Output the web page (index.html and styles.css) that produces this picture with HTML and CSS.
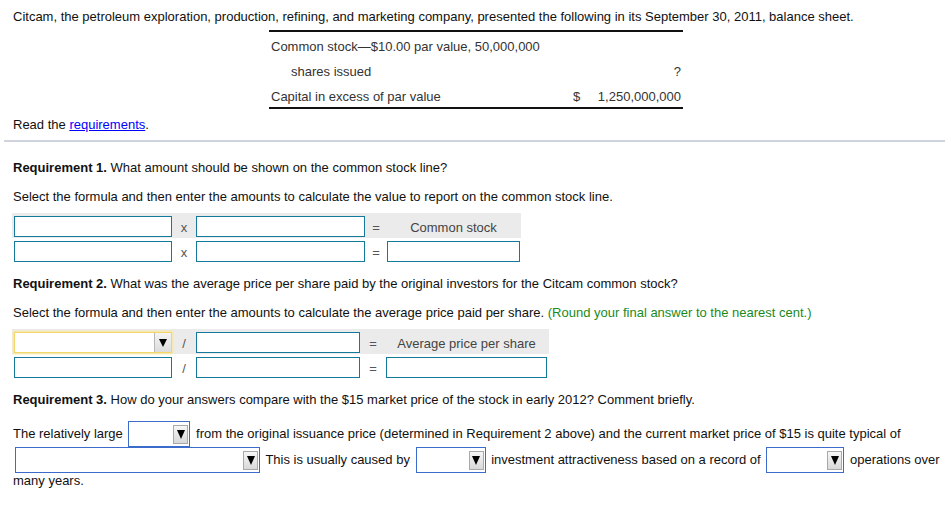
FILE: index.html
```html
<!DOCTYPE html>
<html>
<head>
<meta charset="utf-8">
<link rel="stylesheet" href="styles.css">
</head>
<body>
<div class="page">
  <div class="intro">
    <p class="lead">Citcam, the petroleum exploration, production, refining, and marketing company, presented the following in its September 30, 2011, balance sheet.</p>
    <div class="bs">
      <div class="bs-row"><span class="bs-label wide">Common stock—$10.00 par value, 50,000,000</span></div>
      <div class="bs-row"><span class="bs-label indent">shares issued</span><span class="bs-cur"></span><span class="bs-num">?</span></div>
      <div class="bs-row"><span class="bs-label">Capital in excess of par value</span><span class="bs-cur">$</span><span class="bs-num">1,250,000,000</span></div>
    </div>
    <p class="read">Read the <a class="link" href="#">requirements</a>.</p>
  </div>
  <div class="sep"></div>
  <div class="reqs">
    <p class="req-title first"><b>Requirement 1.</b> What amount should be shown on the common stock line?</p>
    <p class="instr">Select the formula and then enter the amounts to calculate the value to report on the common stock line.</p>
    <div class="formula f1">
      <div class="frow head">
        <span class="box"></span><span class="op">x</span><span class="box"></span><span class="op">=</span><span class="label">Common stock</span>
      </div>
      <div class="frow">
        <span class="box"></span><span class="op">x</span><span class="box"></span><span class="op">=</span><span class="box"></span>
      </div>
    </div>

    <p class="req-title"><b>Requirement 2.</b> What was the average price per share paid by the original investors for the Citcam common stock?</p>
    <p class="instr">Select the formula and then enter the amounts to calculate the average price paid per share. <span class="hint">(Round your final answer to the nearest cent.)</span></p>
    <div class="formula f2">
      <div class="frow head">
        <span class="dd"><span class="dd-btn"><span class="tri"></span></span></span><span class="op">/</span><span class="box"></span><span class="op">=</span><span class="label">Average price per share</span>
      </div>
      <div class="frow">
        <span class="box"></span><span class="op">/</span><span class="box"></span><span class="op">=</span><span class="box"></span>
      </div>
    </div>

    <p class="req-title"><b>Requirement 3.</b> How do your answers compare with the $15 market price of the stock in early 2012? Comment briefly.</p>
    <p class="answer"><span>The relatively large</span> <span class="sel s1"><span class="sel-btn"><span class="tri"></span></span></span> <span>from the original issuance price (determined in Requirement 2 above) and the current market price of $15 is quite typical of</span> <span class="sel s2"><span class="sel-btn"><span class="tri"></span></span></span> <span>This is usually caused by</span> <span class="sel s3"><span class="sel-btn"><span class="tri"></span></span></span> <span>investment attractiveness based on a record of</span> <span class="sel s4"><span class="sel-btn"><span class="tri"></span></span></span> <span>operations over</span> <span>many years.</span></p>
  </div>
</div>
</body>
</html>
```

FILE: styles.css
```css
body {
  margin: 0;
  font-family: "Liberation Sans", Arial, sans-serif;
  font-size: 13px;
  line-height: 16px;
  color: #111;
  background: #fff;
}

.page {
  padding: 9px 6px 0 4px;
}

.intro {
  padding-left: 9px;
}

.lead {
  margin: 0;
}

.bs {
  margin: 5px 0 0 256px;
  width: 414px;
  border-top: 2px solid #111;
  border-bottom: 2px solid #111;
  color: #333;
}

.bs-row {
  display: flex;
  height: 25px;
  padding-top: 7px;
  box-sizing: border-box;
}

.bs-label {
  width: 302px;
  padding-left: 2px;
  box-sizing: border-box;
}

.bs-label.wide {
  width: auto;
}

.bs-label.indent {
  padding-left: 22px;
}

.bs-cur {
  width: 22px;
  padding-left: 2px;
}

.bs-num {
  flex: 1;
  text-align: right;
  padding-right: 2px;
}

.read {
  margin: 8px 0 0;
}

.link {
  color: #00f;
  text-decoration: underline;
}

.sep {
  margin-top: 7px;
  height: 2px;
  background: #cfd3dc;
}

.reqs {
  padding-left: 8px;
}

.req-title,
.instr,
.answer {
  margin: 0;
  padding-left: 1px;
}

.req-title {
  margin-top: 13px;
}

.req-title.first {
  margin-top: 18px;
}

.req-title b {
  color: #111;
}

.instr {
  margin-top: 13px;
}

.hint {
  color: #1b8a1b;
}

.formula {
  margin-top: 8px;
}

.frow {
  display: grid;
  height: 25px;
  padding: 3px 1px 0 2px;
  box-sizing: border-box;
  align-items: start;
  width: max-content;
}

.f1 .frow {
  grid-template-columns: 158px 24px 169px 22px 133px;
}

.f2 .frow {
  grid-template-columns: 158px 24px 164px 26px 161px;
  padding-right: 2px;
}

.frow.head {
  background: #ebebeb;
}

.box {
  display: block;
  height: 21px;
  border: 1px solid #15799b;
  background: #fff;
  box-sizing: border-box;
}

.op {
  text-align: center;
  color: #555;
  line-height: 21px;
  padding-top: 1px;
}

.label {
  text-align: center;
  color: #444;
  line-height: 21px;
  padding-top: 1px;
}

.dd {
  position: relative;
  display: block;
  height: 21px;
  border: 1px solid #f3d56a;
  box-shadow: 0 0 2px 1px #f9e79a;
  background: #fff;
  box-sizing: border-box;
}

.dd-btn {
  position: absolute;
  right: 0;
  top: 0;
  bottom: 0;
  width: 16px;
  background: linear-gradient(#f4f4f4, #dcdcdc);
  border-left: 1px solid #b8b8b8;
  display: flex;
  align-items: center;
  justify-content: center;
}

.tri {
  width: 0;
  height: 0;
  border-left: 4px solid transparent;
  border-right: 4px solid transparent;
  border-top: 8px solid #000;
}

.answer {
  margin-top: 13px;
  width: 935px;
}

.sel {
  position: relative;
  display: inline-block;
  vertical-align: -9px;
  height: 26px;
  margin: 0 2px;
  border: 1px solid #3b6ccb;
  background: #fff;
  box-sizing: border-box;
}

.s1 { width: 62px; }
.s2 { width: 245px; }
.s3 { width: 70px; }
.s4 { width: 78px; }

.sel-btn {
  position: absolute;
  right: 1px;
  bottom: 2px;
  width: 15px;
  height: 19px;
  background: linear-gradient(#f6f6f6, #d9d9d9);
  border: 1px solid #a9a9a9;
  box-sizing: border-box;
  display: flex;
  align-items: center;
  justify-content: center;
}

.sel-btn .tri {
  border-left-width: 4px;
  border-right-width: 4px;
  border-top-width: 9px;
}
```
